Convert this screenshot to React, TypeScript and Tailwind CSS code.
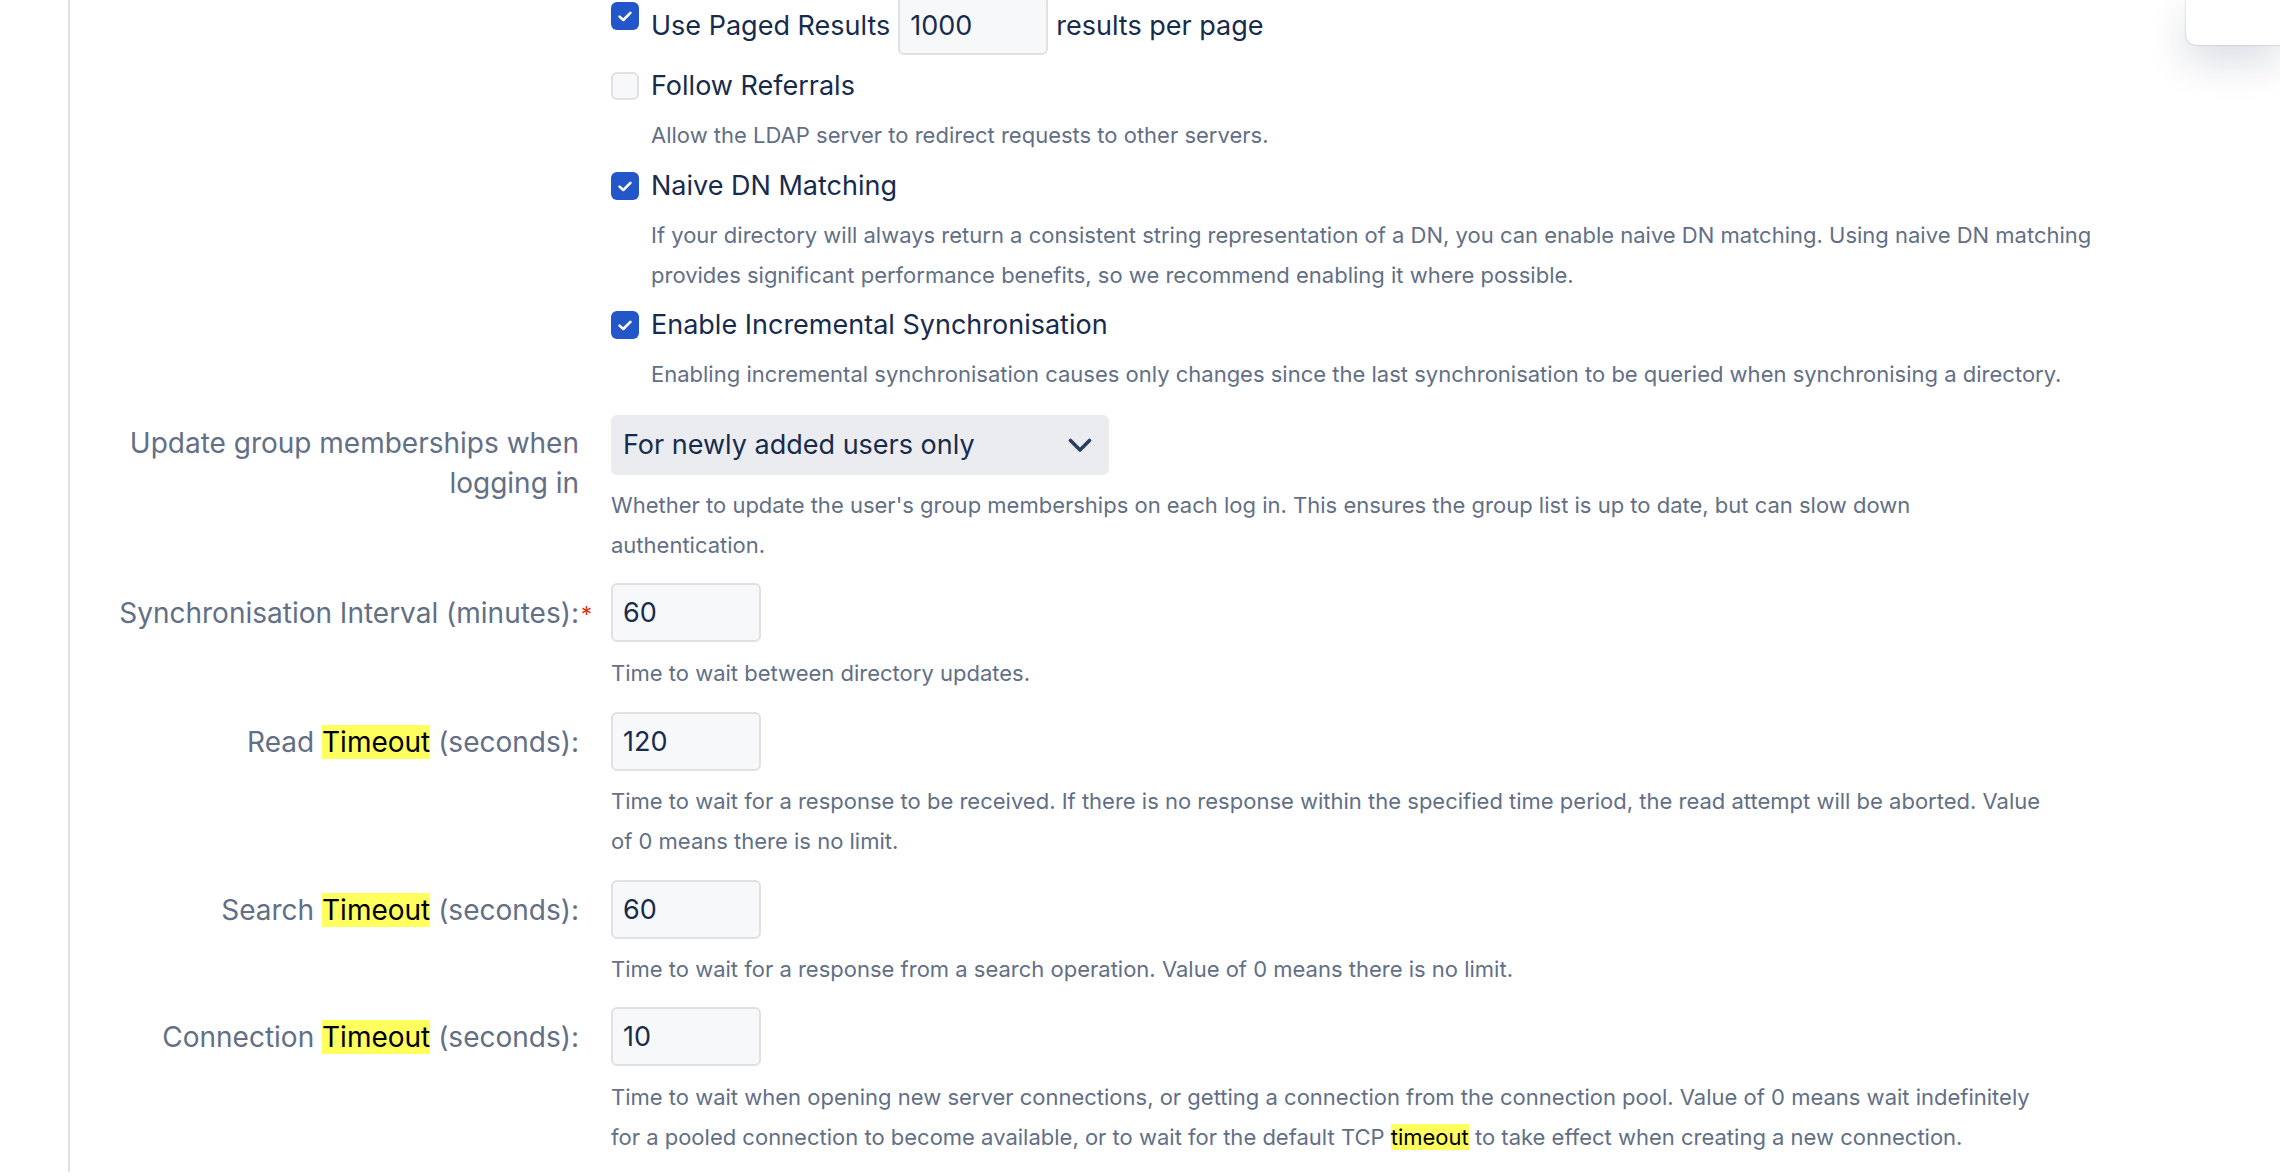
import React from "react";

function Check({ checked }: { checked: boolean }) {
  if (checked) {
    return (
      <span className="absolute left-0 top-[6px] flex h-[28px] w-[28px] items-center justify-center rounded-[6px] bg-[#2356c8]">
        <svg width="14" height="11" viewBox="0 0 14 11" fill="none">
          <path d="M1.6 5.6 L5.3 9 L12.4 1.9" stroke="white" strokeWidth="2.6" strokeLinecap="round" strokeLinejoin="round" />
        </svg>
      </span>
    );
  }
  return <span className="absolute left-0 top-[6px] h-[28px] w-[28px] rounded-[6px] border-2 border-[#dfe1e6] bg-[#f7f8f9]" />;
}

function Desc({ lines, className = "" }: { lines: React.ReactNode[]; className?: string }) {
  return (
    <div className={"text-[22px] leading-[40px] text-[#626f86] " + className}>
      {lines.map((l, i) => (
        <div key={i} className="whitespace-nowrap">
          {l}
        </div>
      ))}
    </div>
  );
}

function TextInput({ value }: { value: string }) {
  return (
    <input
      readOnly
      defaultValue={value}
      className="h-[59px] w-[150px] rounded-[6px] border-2 border-[#dfe1e6] bg-[#f7f8f9] px-[10px] text-[27px] text-[#172b4d] outline-none"
    />
  );
}

function Hl({ children }: { children: React.ReactNode }) {
  return <span className="bg-[#ffff5e] text-black">{children}</span>;
}

function Group({
  label,
  labelPad,
  children,
  className = "",
}: {
  label?: React.ReactNode;
  labelPad?: string;
  children: React.ReactNode;
  className?: string;
}) {
  return (
    <div className={"flex items-start gap-[32px] " + className}>
      <div className={"w-[509px] shrink-0 text-right text-[28px] leading-[40px] text-[#626f86] " + (labelPad ?? "")}>{label}</div>
      <div className="min-w-0 flex-1">{children}</div>
    </div>
  );
}

export default function App() {
  return (
    <div className="relative h-[1176px] w-[2280px] overflow-hidden bg-white font-['Inter',sans-serif]">
      <div className="ml-[68px] h-full border-l-2 border-[#dfe1e6]">
        <div className="-mt-[4px]">
          <Group>
            <div className="relative flex h-[59px] items-center pl-[40px] text-[27px] leading-[40px] text-[#172b4d]">
              <Check checked />
              <span>Use Paged Results</span>
              <span className="ml-[8px]">
                <TextInput value="1000" />
              </span>
              <span className="ml-[8px]">results per page</span>
            </div>

            <div className="relative mt-[11px] pl-[40px]">
              <Check checked={false} />
              <div className="text-[27px] leading-[40px] text-[#172b4d]">Follow Referrals</div>
              <Desc className="mt-[9px]" lines={["Allow the LDAP server to redirect requests to other servers."]} />
            </div>

            <div className="relative mt-[11px] pl-[40px]">
              <Check checked />
              <div className="text-[27px] leading-[40px] text-[#172b4d]">Naive DN Matching</div>
              <Desc
                className="mt-[9px]"
                lines={[
                  "If your directory will always return a consistent string representation of a DN, you can enable naive DN matching. Using naive DN matching",
                  "provides significant performance benefits, so we recommend enabling it where possible.",
                ]}
              />
            </div>

            <div className="relative mt-[10px] pl-[40px]">
              <Check checked />
              <div className="text-[27px] leading-[40px] text-[#172b4d]">Enable Incremental Synchronisation</div>
              <Desc
                className="mt-[9px]"
                lines={["Enabling incremental synchronisation causes only changes since the last synchronisation to be queried when synchronising a directory."]}
              />
            </div>
          </Group>

          <Group
            className="mt-[21px]"
            labelPad="pt-[8px]"
            label={
              <>
                Update group memberships when
                <br />
                logging in
              </>
            }
          >
            <div className="flex h-[60px] w-[498px] items-center justify-between rounded-[6px] bg-[#ebecf0] pl-[12px] pr-[17px] text-[27px] text-[#172b4d]">
              <span>For newly added users only</span>
              <svg width="24" height="15" viewBox="0 0 24 15" fill="none">
                <path d="M2.5 2.5 L12 12 L21.5 2.5" stroke="#2c3e5d" strokeWidth="3.6" strokeLinecap="round" strokeLinejoin="round" />
              </svg>
            </div>
            <Desc
              className="mt-[10px]"
              lines={[
                "Whether to update the user's group memberships on each log in. This ensures the group list is up to date, but can slow down",
                "authentication.",
              ]}
            />
          </Group>

          <Group
            className="mt-[18px]"
            labelPad="pt-[10px]"
            label={
              <span className="relative">
                Synchronisation Interval (minutes):
                <span className="absolute left-full top-[-2px] ml-[2px] text-[22px] text-[#de350b]">*</span>
              </span>
            }
          >
            <TextInput value="60" />
            <Desc className="mt-[11px]" lines={["Time to wait between directory updates."]} />
          </Group>

          <Group
            className="mt-[19px]"
            labelPad="pt-[10px]"
            label={
              <>
                Read <Hl>Timeout</Hl> (seconds):
              </>
            }
          >
            <TextInput value="120" />
            <Desc
              className="mt-[10px]"
              lines={[
                "Time to wait for a response to be received. If there is no response within the specified time period, the read attempt will be aborted. Value",
                "of 0 means there is no limit.",
              ]}
            />
          </Group>

          <Group
            className="mt-[19px]"
            labelPad="pt-[10px]"
            label={
              <>
                Search <Hl>Timeout</Hl> (seconds):
              </>
            }
          >
            <TextInput value="60" />
            <Desc className="mt-[10px]" lines={["Time to wait for a response from a search operation. Value of 0 means there is no limit."]} />
          </Group>

          <Group
            className="mt-[18px]"
            labelPad="pt-[10px]"
            label={
              <>
                Connection <Hl>Timeout</Hl> (seconds):
              </>
            }
          >
            <TextInput value="10" />
            <Desc
              className="mt-[11px]"
              lines={[
                "Time to wait when opening new server connections, or getting a connection from the connection pool. Value of 0 means wait indefinitely",
                <>
                  for a pooled connection to become available, or to wait for the default TCP <Hl>timeout</Hl> to take effect when creating a new connection.
                </>,
              ]}
            />
          </Group>
        </div>
      </div>

      <div className="absolute right-0 top-0 h-[45px] w-[94px] rounded-bl-[10px] bg-white shadow-[0_0_2px_rgba(9,30,66,0.3),0_16px_40px_rgba(9,30,66,0.16)]" />
    </div>
  );
}
